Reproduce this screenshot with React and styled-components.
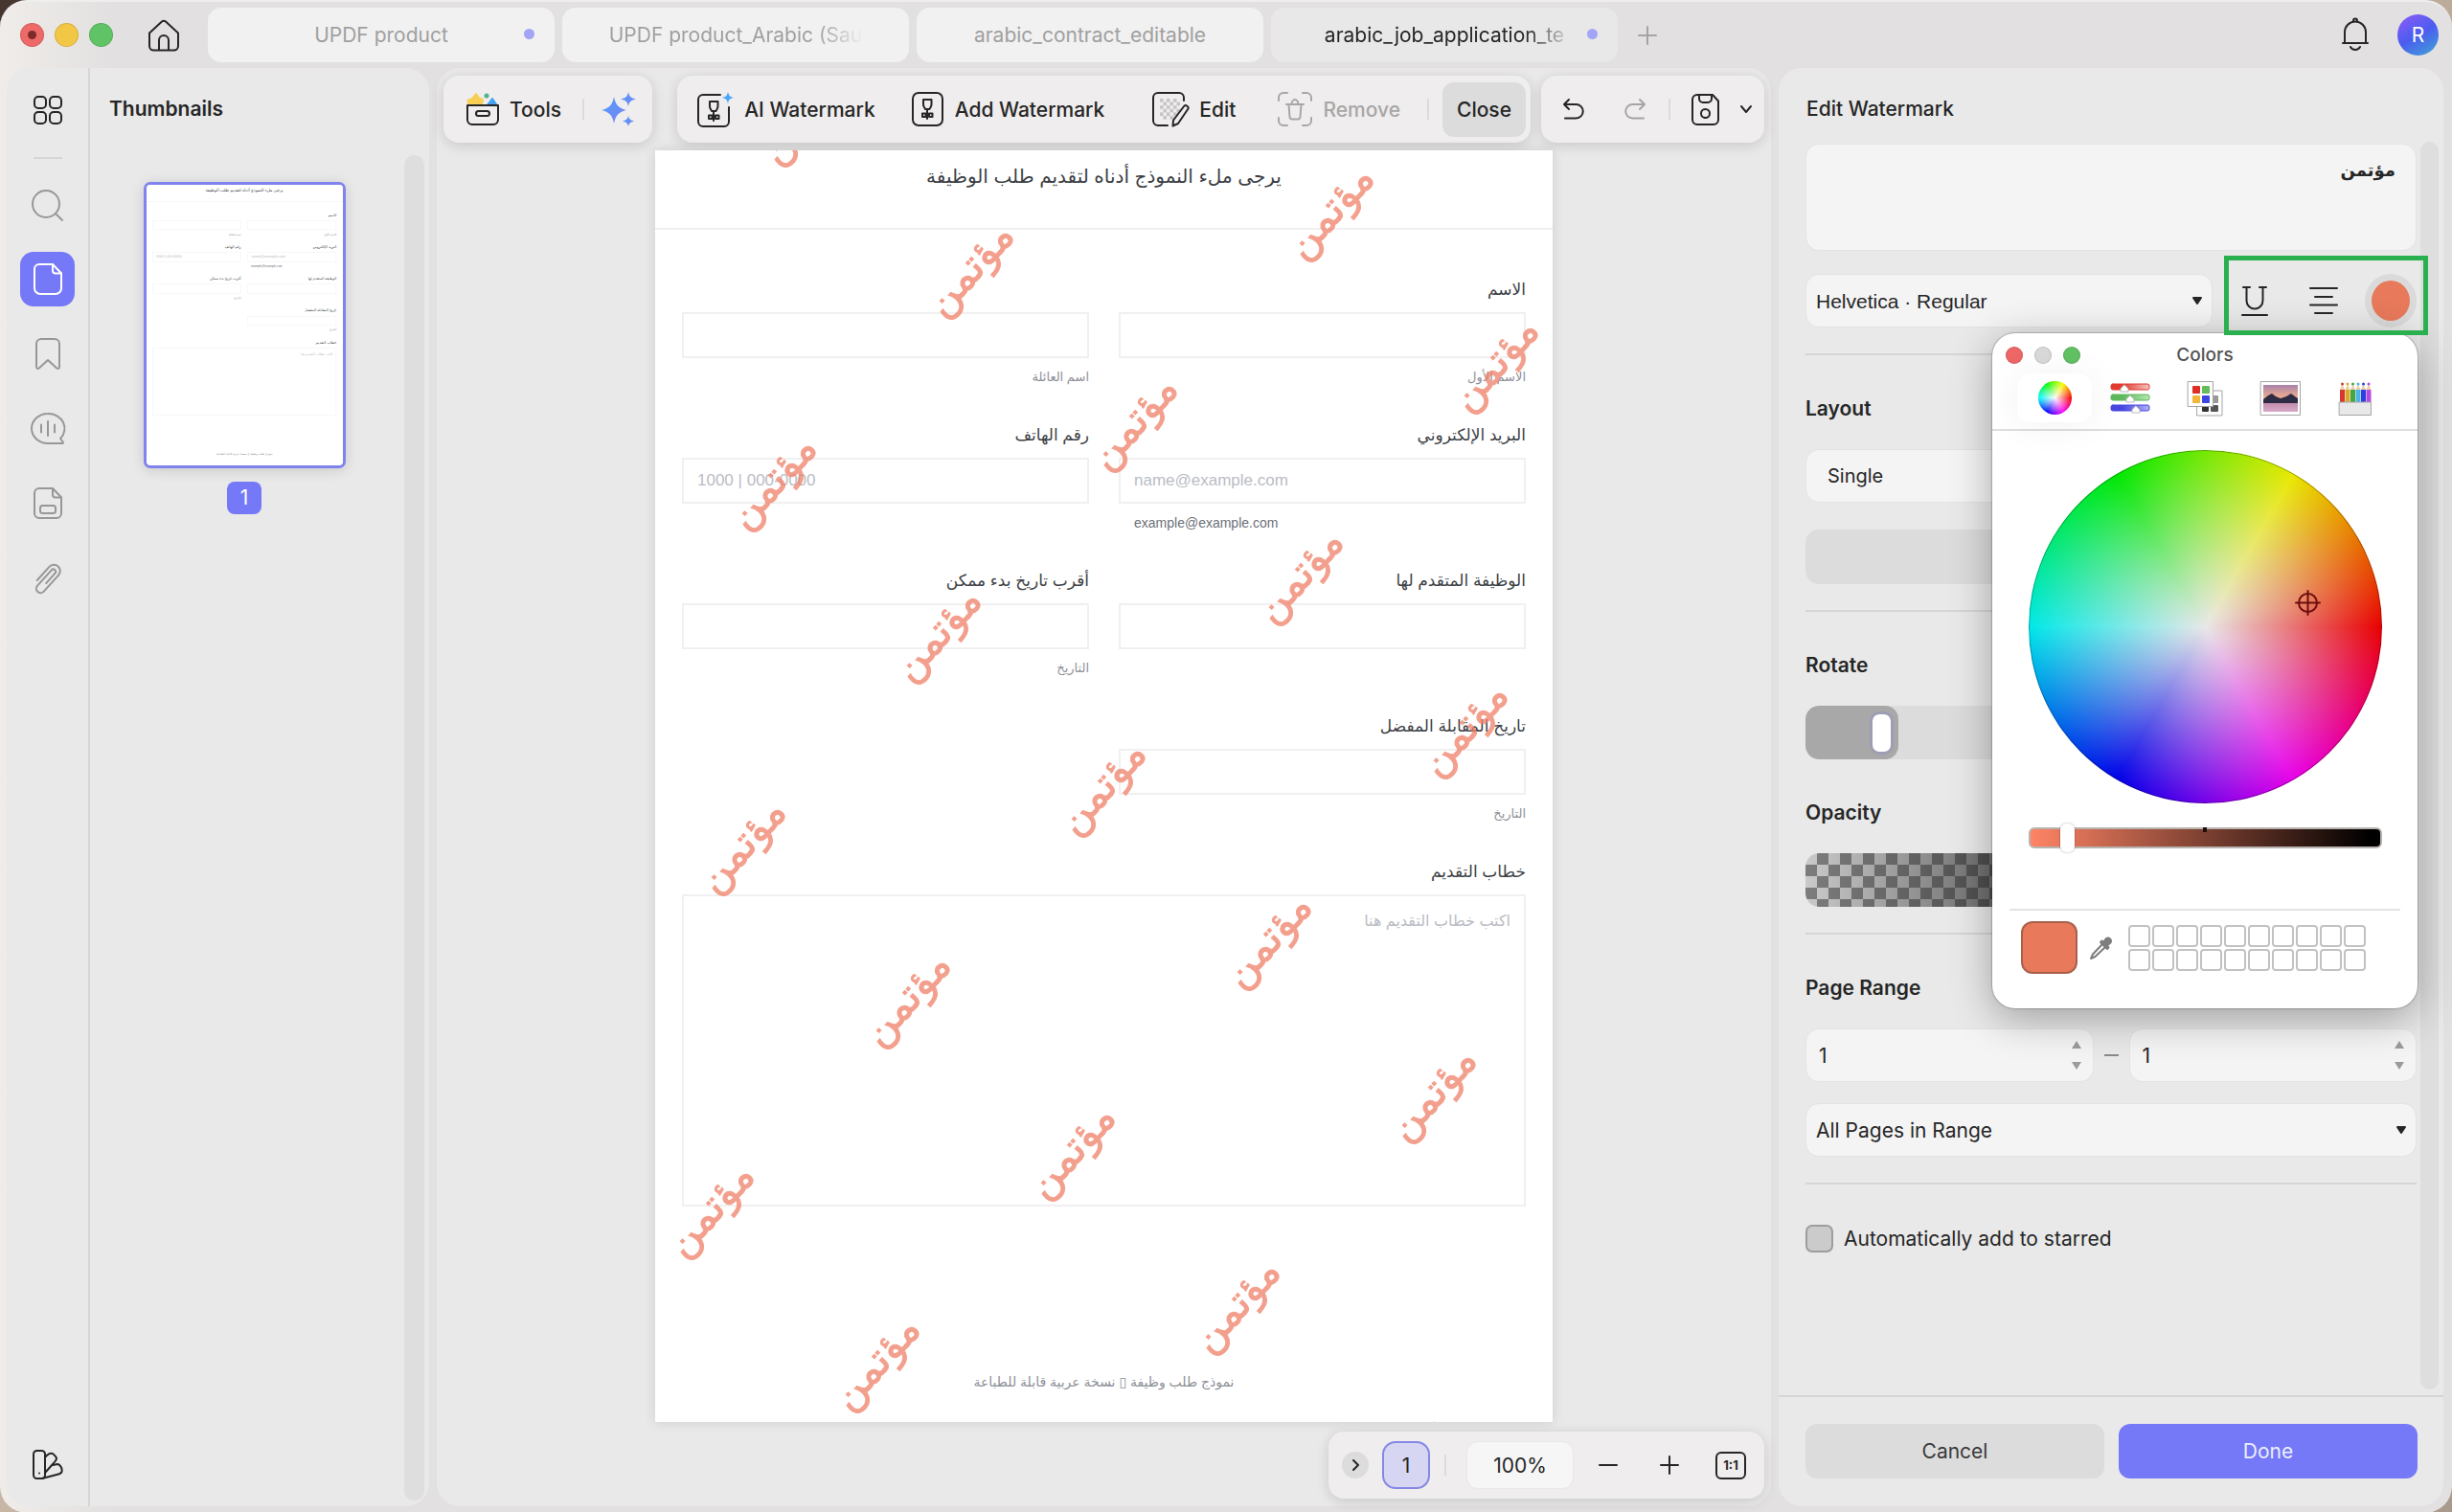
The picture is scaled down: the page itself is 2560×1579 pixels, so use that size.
import React, { useState } from 'react'
import styled, { createGlobalStyle, css } from 'styled-components'

const GlobalStyle = createGlobalStyle`
html {
  background: linear-gradient(135deg, #45362f 0, #45362f 30px, #d9c6b2 60px, #a89a8c 100%);
}
body {
  margin: 0;
  font-family: Inter, "DejaVu Sans", sans-serif;
  font-size: 21px;
  color: #262626;
}
*, *::before, *::after {
  box-sizing: border-box;
}
button, input, select, textarea {
  font: inherit;
  color: inherit;
  margin: 0;
}
button {
  border: none;
  background: none;
  padding: 0;
}
h2, h3, p {
  margin: 0;
}
`;

/* ---------- window ---------- */

const Window = styled.div`
display: flex;
flex-direction: column;
min-height: 100vh;
border-radius: 28px;
background: linear-gradient(90deg, #efece9 0, #e2e0e0 120px);
border-top: 2px solid #efeeee;
overflow: hidden;
`;
const TitleBar = styled.header`
display: flex;
align-items: center;
height: 69px;
padding: 0 14px 0 21px;
`;
const Lights = styled.div`
display: flex;
gap: ${(p) => (p.$small ? '12px' : '11px')};
`;
const Light = styled.button`
display: flex;
align-items: center;
justify-content: center;
width: ${(p) => (p.$small ? '18px' : '25px')};
height: ${(p) => (p.$small ? '18px' : '25px')};
border-radius: 50%;
background: ${(p) => p.$color};
box-shadow: inset 0 0 0 1px rgba(0, 0, 0, 0.12);
&[data-dirty]::after {
  content: '';
  width: 9px;
  height: 9px;
  border-radius: 50%;
  background: #7c2b29;
}
`;
const IconButton = styled.button`
display: flex;
align-items: center;
justify-content: center;
margin-right: ${(p) => p.$after || '0'};
color: ${(p) => (p.$muted ? '#a5a3a3' : '#262626')};
`;
const HomeButton = styled(IconButton)`
margin: 0 29px 0 36px;
`;
const Tabs = styled.nav`
display: flex;
gap: 8px;
`;
const Tab = styled.button`
position: relative;
width: 362px;
height: 57px;
padding: 0 47px;
border-radius: 14px;
background: ${(p) => (p.$active ? '#e8e8e8' : '#f1f1f1')};
color: ${(p) => (p.$active ? '#262626' : '#a0a0a0')};
`;
const TabLabel = styled.span`
display: block;
overflow: hidden;
white-space: nowrap;
mask-image: ${(p) => (p.$fade ? 'linear-gradient(90deg, #000 calc(100% - 50px), transparent)' : 'none')};
`;
const Dot = styled.i`
position: absolute;
right: 21px;
top: 22px;
width: 11px;
height: 11px;
border-radius: 50%;
background: #a3a4f5;
`;
const AddTab = styled(IconButton)`
margin-left: 22px;
`;
const Account = styled.div`
display: flex;
align-items: center;
gap: 30px;
margin-left: auto;
`;
const Avatar = styled.button`
width: 43px;
height: 43px;
border-radius: 50%;
background: linear-gradient(150deg, #7c5cf5 15%, #4b5cf0 50%, #3fa0d8 95%);
color: #fff;
`;
const Body = styled.div`
display: flex;
flex: 1;
gap: 8px;
padding: 0 9px 7px 7px;
`;
const panel = css`
background: #e9e9e9;
border-radius: 24px;
`;

/* ---------- left side ---------- */

const LeftPanel = styled.aside`
${panel}
display: flex;
width: 441px;
`;
const Rail = styled.nav`
display: flex;
flex-direction: column;
align-items: center;
gap: 21px;
width: 87px;
padding: 15px 0 15px;
border-right: 2px solid #d6d6d6;
hr {
  width: 30px;
  height: 2px;
  margin: 0 0 -2px;
  border: none;
  background: #d6d6d6;
}
`;
const RailButton = styled.button`
display: flex;
align-items: center;
justify-content: center;
width: 57px;
height: 57px;
border-radius: 14px;
background: ${(p) => (p.$active ? '#7579f7' : 'none')};
color: ${(p) => (p.$active ? '#fff' : p.$dark ? '#262626' : '#979797')};
&:last-child {
  margin-top: auto;
}
`;
const Thumbnails = styled.section`
display: flex;
flex-direction: column;
flex: 1;
padding: 29px 5px 6px 20px;
h2 {
  font-size: 21px;
  line-height: 28px;
  font-weight: 600;
}
`;
const ThumbScroll = styled.div`
display: flex;
flex: 1;
margin-top: 34px;
`;
const ThumbList = styled.div`
display: flex;
flex-direction: column;
align-items: center;
flex: 1;
padding: 28px 26px 0 0;
`;
const Thumb = styled.div`
width: 211px;
height: 299px;
border: 3px solid #8083ee;
border-radius: 7px;
background: #fff;
overflow: hidden;
box-shadow: 0 2px 14px rgba(0, 0, 0, 0.14);
`;
const ThumbPage = styled.div`
zoom: 0.219;
input, textarea, p {
  border-color: #f8f8f8;
}
`;
const ThumbNumber = styled.span`
width: 36px;
margin-top: 14px;
border-radius: 8px;
background: #7579f7;
color: #fff;
line-height: 34px;
text-align: center;
`;
const ScrollBar = styled.div`
width: ${(p) => p.$width || '21px'};
border-radius: 11px;
background: #dedede;
`;

/* ---------- toolbar ---------- */

const Center = styled.main`
${panel}
display: flex;
flex-direction: column;
flex: 1;
min-width: 0;
padding: 8px 7px;
`;
const Toolbars = styled.div`
display: flex;
gap: 11px;
> :first-child {
  margin-right: auto;
}
`;
const Bar = styled.div`
display: flex;
align-items: center;
height: 70px;
border-radius: 16px;
background: #efeded;
box-shadow: 0 3px 14px rgba(0, 0, 0, 0.14);
padding: ${(p) => p.$padding};
`;
const Tool = styled.button`
display: flex;
align-items: center;
gap: 11px;
margin-right: ${(p) => p.$after || '0'};
font-weight: 500;
white-space: nowrap;
color: ${(p) => (p.disabled ? '#a8a6a6' : '#262626')};
`;
const Divider = styled.span`
width: 2px;
height: 22px;
margin-right: ${(p) => p.$after};
background: #dcdada;
`;
const CloseButton = styled.button`
width: 87px;
height: 57px;
border-radius: 12px;
background: #dcdcdc;
font-weight: 500;
`;

/* ---------- document ---------- */

const Sheet = styled.article`
position: relative;
width: 937px;
max-width: 100%;
margin: 8px auto 10px;
background: #fff;
box-shadow: 0 0 12px rgba(0, 0, 0, 0.12);
overflow: hidden;
direction: rtl;
font-family: "Liberation Sans", "DejaVu Sans", sans-serif;
color: #3c3f45;
`;
const ThumbSheet = styled(Sheet)`
margin: 0;
box-shadow: none;
`;
const Intro = styled.p`
height: 83px;
padding-top: 12px;
border-bottom: 2px solid #f0f0f2;
text-align: center;
font-size: 20px;
line-height: 30px;
`;
const FormGrid = styled.div`
display: grid;
grid-template-columns: 1fr 1fr;
column-gap: 31px;
row-gap: 36px;
padding: 48px 28px 0;
`;
const Field = styled.div`
display: flex;
flex-direction: column;
grid-column: ${(p) => (p.$wide ? '1 / -1' : p.$first ? '1' : 'auto')};
label {
  height: 30px;
  margin-bottom: 8px;
  font-size: 17px;
  line-height: 30px;
}
small {
  height: 20px;
  margin-top: 10px;
  font-size: 13px;
  line-height: 20px;
  color: #8d9098;
}
small[dir='ltr'] {
  padding-left: 16px;
  font-size: 14px;
  color: #6c7078;
}
`;
const fieldBox = css`
width: 100%;
border: 2px solid #f0f0f2;
border-radius: 0;
background: transparent;
outline: none;
padding: 0 14px;
&::placeholder {
  color: #babcc4;
  opacity: 1;
}
`;
const FieldInput = styled.input`
${fieldBox}
height: 48px;
font-size: 17px;
`;
const FieldArea = styled.textarea`
${fieldBox}
height: 326px;
padding-top: 12px;
font-size: 16px;
line-height: 28px;
resize: none;
`;
const SheetFooter = styled.p`
padding: 171px 0 30px;
text-align: center;
font-size: 14px;
line-height: 24px;
color: #8d9098;
`;
const Mark = styled.span`
position: absolute;
left: ${(p) => p.$x}px;
top: ${(p) => p.$y}px;
padding-bottom: 20px;
transform: translate(-50%, -50%) rotate(-48deg);
font-family: "DejaVu Sans", sans-serif;
font-size: 43px;
line-height: 48px;
color: #f08068;
-webkit-text-stroke: 1px #f08068;
opacity: 0.75;
pointer-events: none;
`;
const PageBar = styled(Bar)`
align-self: flex-end;
`;
const RoundButton = styled.button`
display: flex;
align-items: center;
justify-content: center;
width: 28px;
height: 28px;
border-radius: 50%;
background: #dddcdc;
`;
const PageNumber = styled.input`
width: 50px;
height: 50px;
margin: 0 15px 0 14px;
padding: 0;
border: 2px solid #8587e6;
border-radius: 14px;
background: #d6d6f3;
text-align: center;
`;
const ZoomLevel = styled.button`
width: 112px;
height: 50px;
margin-right: 27px;
border: 1px solid #e8e8e8;
border-radius: 12px;
background: #f6f6f6;
`;

/* ---------- edit watermark ---------- */

const RightPanel = styled.aside`
${panel}
position: relative;
display: flex;
flex-direction: column;
width: 694px;
`;
const PanelTitle = styled.h2`
padding: 29px 0 0 29px;
font-size: 21px;
line-height: 28px;
font-weight: 500;
`;
const PanelScroll = styled.div`
display: flex;
flex: 1;
gap: 4px;
padding: 20px 5px 6px 28px;
`;
const Options = styled.form`
display: flex;
flex-direction: column;
flex: 1;
min-width: 0;
padding-top: 2px;
h3 {
  font-size: 21px;
  line-height: 28px;
  font-weight: 600;
}
> hr {
  width: 100%;
  height: 2px;
  margin: 27px 0 42px;
  border: none;
  background: #d5d5d5;
}
`;
const softBox = css`
width: 100%;
height: 56px;
border: 1px solid #e3e3e3;
border-radius: 14px;
background: #f4f4f4;
outline: none;
`;
const WatermarkText = styled.textarea`
${softBox}
height: 112px;
padding: 12px 21px;
direction: rtl;
resize: none;
font-family: "DejaVu Sans", sans-serif;
font-size: 18px;
font-weight: 700;
line-height: 30px;
`;
const FontRow = styled.div`
display: flex;
gap: 12px;
height: 56px;
margin-top: 24px;
> :first-child {
  flex: 1;
}
`;
const SelectBox = styled.div`
display: grid;
align-items: center;
select, svg {
  grid-area: 1 / 1;
}
select {
  ${softBox}
  appearance: none;
  padding: 0 10px;
  font-family: ${(p) => p.$font || 'inherit'};
}
svg {
  justify-self: end;
  margin-right: 11px;
  pointer-events: none;
}
`;
const StyleTools = styled.div`
position: relative;
display: flex;
align-items: center;
gap: 43px;
width: 201px;
padding-left: 18px;
&::after {
  content: '';
  position: absolute;
  inset: -19px -12px -8px 0;
  z-index: 3;
  border: 5px solid #2bb04f;
  pointer-events: none;
}
`;
const ColorButton = styled.button`
width: 56px;
height: 56px;
margin-left: -15px;
border: 7px solid #dadada;
border-radius: 50%;
background: #e8795b;
`;
const LayoutInput = styled.select`
${softBox}
appearance: none;
margin-top: 28px;
padding: 0 22px;
font-size: 20px;
`;
const DisabledBox = styled.button`
height: 57px;
margin-top: 28px;
border-radius: 14px;
background: #dcdcdc;
`;
const Slider = styled.div`
display: grid;
height: 56px;
margin: 28px 0 ${(p) => (p.$last ? '0' : '42px')};
border-radius: 14px;
background: #dcdcdc;
overflow: hidden;
&::before {
  content: '';
  grid-area: 1 / 1;
  width: ${(p) => (p.$checker ? '100%' : '97px')};
  border-radius: 14px;
  background: ${(p) =>
    p.$checker
      ? 'linear-gradient(90deg, transparent, rgba(40, 40, 40, 0.95) 50%), repeating-conic-gradient(#7d7d7d 0 25%, #cacaca 0 50%) 0 0 / 24px 24px'
      : '#a8a8a8'};
}
input {
  grid-area: 1 / 1;
  appearance: none;
  width: 100%;
  height: 56px;
  padding: 0 8px;
  background: none;
}
input::-webkit-slider-thumb {
  appearance: none;
  width: 19px;
  height: 39px;
  border-radius: 7px;
  background: #fff;
  box-shadow: 0 0 0 3px #9d9db4;
}
`;
const RangeRow = styled.div`
display: flex;
align-items: center;
gap: 11px;
margin: 28px 0 22px;
> i {
  width: 15px;
  height: 2px;
  background: #8a8a8a;
}
`;
const Stepper = styled.div`
${softBox}
display: flex;
align-items: center;
flex: 1;
min-width: 0;
padding: 0 11px 0 13px;
input {
  flex: 1;
  min-width: 0;
  border: none;
  background: none;
  outline: none;
  padding: 0;
  appearance: textfield;
}
input::-webkit-inner-spin-button {
  display: none;
}
svg {
  color: #9b9b9b;
}
`;
const CheckRow = styled.label`
display: flex;
align-items: center;
gap: 11px;
input {
  appearance: none;
  width: 29px;
  height: 29px;
  border: 2px solid #9d9d9d;
  border-radius: 7px;
  background: #cbcbcb;
}
`;
const Actions = styled.footer`
display: flex;
gap: 15px;
padding: 28px 27px 29px 28px;
border-top: 2px solid #d5d5d5;
`;
const ActionButton = styled.button`
flex: 1;
height: 57px;
border-radius: 12px;
background: ${(p) => (p.$primary ? '#7579f7' : '#dcdcdc')};
color: ${(p) => (p.$primary ? '#eceffe' : '#3a3a3a')};
`;

/* ---------- colour picker window ---------- */

const Picker = styled.section`
position: absolute;
top: 277px;
right: 27px;
z-index: 2;
width: 444px;
border-radius: 24px;
background: #fff;
padding-bottom: 36px;
box-shadow: 0 0 1px 1px rgba(0, 0, 0, 0.2), 0 10px 44px rgba(0, 0, 0, 0.32);
`;
const PickerTitle = styled.div`
display: grid;
grid-template-columns: 1fr auto 1fr;
align-items: center;
height: 42px;
padding: 3px 14px 0;
h2 {
  font-size: 19px;
  font-weight: 500;
  color: #555;
}
`;
const PickerTabs = styled.div`
display: flex;
justify-content: space-between;
padding: 0 26px 7px;
border-bottom: 2px solid #dedede;
`;
const PickerTab = styled.button`
display: flex;
align-items: center;
justify-content: center;
width: 78px;
height: 51px;
border-radius: 14px;
box-shadow: ${(p) => (p.$active ? '0 2px 40px rgba(0, 0, 0, 0.06)' : 'none')};
`;
const wheel = css`
border-radius: 50%;
background:
  radial-gradient(circle closest-side, #e8e8e8, rgba(232, 232, 232, 0)),
  conic-gradient(from 90deg, #e80000, #e800e8, #0000e8, #00e8e8, #00e800, #e8e800, #e80000);
`;
const SmallWheel = styled.span`
${wheel}
width: 35px;
height: 35px;
filter: brightness(1.08);
`;
const Wheel = styled.div`
${wheel}
position: relative;
width: 369px;
height: 369px;
margin: 20px auto 21px;
box-shadow: inset 0 0 0 1px rgba(0, 0, 0, 0.3);
svg {
  position: absolute;
  left: 278px;
  top: 146px;
}
`;
const BrightnessBox = styled.div`
position: relative;
display: flex;
width: 369px;
margin: 0 auto 59px;
&::after {
  content: '';
  position: absolute;
  left: 182px;
  top: 4px;
  width: 4px;
  height: 5px;
  background: #1a1010;
}
`;
const Brightness = styled.input`
appearance: none;
width: 100%;
height: 30px;
background: none;
&::-webkit-slider-runnable-track {
  height: 22px;
  border: 2px solid #b9b3b0;
  border-radius: 6px;
  background: linear-gradient(90deg, #ff8465, #000 97%);
}
&::-webkit-slider-thumb {
  appearance: none;
  width: 15px;
  height: 30px;
  margin-top: -6px;
  border-radius: 6px;
  background: #fff;
  box-shadow: 0 0 2px rgba(0, 0, 0, 0.4);
}
`;
const SwatchRow = styled.div`
display: flex;
align-items: center;
margin: 0 18px;
padding: 11px 12px 0;
border-top: 2px solid #e3e3e3;
`;
const CurrentColor = styled.button`
width: 59px;
height: 55px;
border: 2px solid #a9604b;
border-radius: 12px;
background: #e8795b;
`;
const Dropper = styled(IconButton)`
margin: 0 16px 0 13px;
color: #7e7e7e;
`;
const Swatches = styled.div`
display: grid;
grid-template-columns: repeat(10, 23px);
gap: 2px;
button {
  height: 23px;
  border: 2px solid #c2c2c2;
  border-radius: 4px;
}
`;

/* ---------- icons ---------- */

const Svg = styled.svg`
display: block;
flex: none;
fill: none;
stroke: ${(p) => (p.$plain ? 'none' : 'currentColor')};
stroke-width: ${(p) => (p.$plain ? 1 : 2)};
stroke-linecap: round;
stroke-linejoin: round;
overflow: visible;
`;

const Icon = ({ w, h = w, plain, color, children }) => (
  <Svg width={w} height={h} viewBox={`0 0 ${w} ${h}`} $plain={plain} color={color} aria-hidden='true'>{children}</Svg>
)

const HomeIcon = () => (
  <Icon w={34}>
    <path d='M2 14.5 15 2.6a3 3 0 0 1 4 0L32 14.5V28a4.5 4.5 0 0 1-4.5 4.5h-21A4.5 4.5 0 0 1 2 28z' />
    <path d='M12 32V22a5 5 0 0 1 10 0v10' />
  </Icon>
)
const GridIcon = () => (
  <Icon w={30}>
    <rect x='1' y='1' width='12' height='12' rx='4' />
    <rect x='17' y='1' width='12' height='12' rx='4' />
    <rect x='1' y='17' width='12' height='12' rx='4' />
    <rect x='17' y='17' width='12' height='12' rx='4' />
  </Icon>
)
const SearchIcon = () => (
  <Icon w={34}>
    <circle cx='15' cy='16' r='14' />
    <path d='m25 26 7 7' />
  </Icon>
)
const FileIcon = () => (
  <Icon w={30} h={33}>
    <path d='M6 1h14l9 9.5V26a6 6 0 0 1-6 6H7a6 6 0 0 1-6-6V6a5 5 0 0 1 5-5z' />
    <path d='M20 1v6.5a3 3 0 0 0 3 3h6' />
  </Icon>
)
const BookmarkIcon = () => (
  <Icon w={26} h={33}>
    <path d='M6 1h14a5 5 0 0 1 5 5v24c0 2-1.5 2.500-3 1.200L13 23l-9 8.200C2.500 32.500 1 32 1 30V6a5 5 0 0 1 5-5z' />
  </Icon>
)
const CommentIcon = () => (
  <Icon w={36} h={33}>
    <path d='M18 1a17 15.5 0 1 0 0 31h15c1 0 1.300-.8.6-1.500L31 27A17 15.500 0 0 0 18 1z' />
    <path d='M11 12.500v8M18 9v15M25 12.500v8' />
  </Icon>
)
const FormIcon = () => (
  <Icon w={30} h={33}>
    <path d='M6 1h14l9 9.5V27a5 5 0 0 1-5 5H6a5 5 0 0 1-5-5V6a5 5 0 0 1 5-5z' />
    <path d='M20 1v6.5a3 3 0 0 0 3 3h6' />
    <rect x='7' y='19' width='16' height='8' rx='2.5' />
  </Icon>
)
const ClipIcon = () => (
  <Icon w={34}>
    <g transform='translate(17 17) rotate(-48)'>
      <path d='M-9 -7H10a6.5 6.5 0 0 1 0 13H-13a4.5 4.5 0 0 1 0 -9H9a2.5 2.5 0 0 1 0 5H-5' />
    </g>
  </Icon>
)
const PaletteIcon = () => (
  <Icon w={32} h={31}>
    <rect x='1' y='1' width='12' height='29' rx='3.5' />
    <path d='M13 8c2-2.500 5-4.500 7-4.200 2 .2 5 4.200 5 5.200 0 2-2 4-3.500 5.500L13 24' />
    <path d='m21 16 5-1c2 0 4.500 3 4.700 6.500.1 2.500-1.700 3.500-3.700 4L10 30' />
    <path d='M7 24.500v.1' />
  </Icon>
)
const BellIcon = () => (
  <Icon w={28} h={35}>
    <path d='M3 26V14.500a11 11 0 0 1 22 0V26M1 26h26M12 3.500v-1a2 2 0 0 1 4 0v1M9 30a5.500 5 0 0 0 10 0' />
  </Icon>
)
const PlusIcon = ({ size = 18 }) => (
  <Icon w={size}><path d={`M${size / 2} 0V${size}M0 ${size / 2}H${size}`} /></Icon>
)
const ToolsIcon = () => (
  <Icon w={34}>
    <path d='m10 1 3 4.500 4 1.500-1.500 7H3L1.500 8 6 6z' fill='#f7cf55' stroke='#f7cf55' />
    <circle cx='21' cy='3' r='2.5' fill='#4bb58b' stroke='none' />
    <path d='m27 6 5.500 8H21z' fill='#45a3f3' stroke='#45a3f3' />
    <path d='M1 13h32v15a5 5 0 0 1-5 5H6a5 5 0 0 1-5-5z' fill='#efeded' />
    <rect x='10' y='19' width='14' height='5' rx='2.5' />
  </Icon>
)
const SparkIcon = () => (
  <Icon w={36} plain>
    <defs>
      <linearGradient id='spark' x1='0' y1='0' x2='1' y2='1'>
        <stop offset='0' stopColor='#4fa0f5' />
        <stop offset='1' stopColor='#7c80f6' />
      </linearGradient>
    </defs>
    <g fill='url(#spark)'>
      <path d='M13 5c1.500 8 4.500 12 13 14-8.500 2-11.500 6-13 14C11.500 25 8.500 21 0 19 8.500 17 11.500 13 13 5z' />
      <path d='M28 0c.9 4.600 2.800 6.500 8 7.500-5.200 1-7.100 2.900-8 7.500-.9-4.600-2.800-6.500-8-7.500 5.200-1 7.100-2.900 8-7.500z' />
      <path d='M28 25c.7 3 2 4.500 6 5.500-4 1-5.300 2.500-6 5.500-.7-3-2-4.500-6-5.500 4-1 5.300-2.500 6-5.500z' />
    </g>
  </Icon>
)
const stamp = (
  <>
    <path d='M12 8h8.500v5c0 2.500-1.500 3.500-2 5h-4.500c-.5-1.500-2-2.500-2-5z' />
    <path d='M16 18v10M11 22.500h3.500v2H18v-2h3.500V26H18M11 22.500V26h5' />
  </>
)
const AiStampIcon = () => (
  <Icon w={38} h={37}>
    <path d='M24 3H6a5 5 0 0 0-5 5v23a5 5 0 0 0 5 5h22a5 5 0 0 0 5-5V16' />
    <g transform='translate(1 2)'>{stamp}</g>
    <path d='M32 0c1 4 2 5 6 6-4 1-5 2-6 6-1-4-2-5-6-6 4-1 5-2 6-6z' fill='#4aa7f8' stroke='none' />
  </Icon>
)
const StampIcon = () => (
  <Icon w={34} h={36}>
    <rect x='1' y='1' width='31' height='34' rx='6' />
    {stamp}
  </Icon>
)
const EditIcon = () => (
  <Icon w={38} h={36}>
    <g fill='#c6c4c4' stroke='none'>
      {[0, 1, 2, 3, 4, 5].map((r) =>
        [0, 1, 2].map((c) => <rect key={`${r}${c}`} x={8 + c * 7 + (r % 2) * 3.5} y={7 + r * 3.6} width='3.5' height='3.6' />)
      )}
    </g>
    <path d='M33 9V6a5 5 0 0 0-5-5H6a5 5 0 0 0-5 5v24a5 5 0 0 0 5 5h10' />
    <path d='M33.500 14.500c1.500-1.500 5 1 4 3L27 33l-5.500 2.500.5-6z' fill='#efeded' />
  </Icon>
)
const RemoveIcon = () => (
  <Icon w={36}>
    <path d='M1 9V6a5 5 0 0 1 5-5h4M26 1h4a5 5 0 0 1 5 5v3M35 27v3a5 5 0 0 1-5 5h-4M10 35H6a5 5 0 0 1-5-5v-3' />
    <path d='M9 13h18M11.500 13l1 13a2.500 2.500 0 0 0 2.500 2.500h6a2.500 2.500 0 0 0 2.500-2.500l1-13M14.500 13a3.500 5 0 0 1 7 0' />
  </Icon>
)
const UndoIcon = ({ flip }) => (
  <Icon w={22}>
    <g transform={flip ? 'translate(22 0) scale(-1 1)' : undefined}>
      <path d='M6 1 1 6l5 5M1 6h12.500a7 7 0 0 1 0 14.500H2' />
    </g>
  </Icon>
)
const SaveIcon = () => (
  <Icon w={29} h={33}>
    <path d='M6 1h16l6 6.500V27a5 5 0 0 1-5 5H6a5 5 0 0 1-5-5V6a5 5 0 0 1 5-5z' />
    <path d='M8 1v4a4 4 0 0 0 4 4h5a4 4 0 0 0 4-4V1' />
    <circle cx='14.5' cy='20.5' r='4.5' />
  </Icon>
)
const Triangle = () => (
  <Icon w={10} h={8}><path d='M1 1h8L5 7z' fill='currentColor' /></Icon>
)
const UnderlineIcon = () => (
  <Icon w={28} h={31}>
    <path d='M2 1h7M19 1h7M5.500 1v14a8.500 8.500 0 0 0 17 0V1M1 30h26' />
  </Icon>
)
const AlignIcon = () => (
  <Icon w={30} h={28}><path d='M1 1h28M6 10h18M1 18.500h28M6 27h18' /></Icon>
)
const OneToOneIcon = () => (
  <Icon w={32} h={29}>
    <rect x='1' y='1' width='30' height='27' rx='5' />
    <text x='16' y='19' textAnchor='middle' fontSize='13' fontWeight='700' fill='currentColor' stroke='none'>1:1</text>
  </Icon>
)
const SlidersIcon = () => (
  <Icon w={40} h={32} plain>
    {[['#e23a30', '#f5c4c0', 14], ['#5cb85a', '#b5e6b0', 20], ['#4747e0', '#b0b0f5', 26]].map(([a, b, x], i) => (
      <g key={a}>
        <linearGradient id={`bar${i}`}><stop offset='.3' stopColor={a} /><stop offset='1' stopColor={b} /></linearGradient>
        <rect x='0' y={1 + i * 11} width='40' height='6' rx='2' fill={`url(#bar${i})`} stroke={a} />
        <path d={`M${x} ${2 + i * 11}l4 4v3h-8v-3z`} fill='#fff' stroke='#bbb' />
      </g>
    ))}
  </Icon>
)
const PalettesIcon = () => (
  <Icon w={37} h={36} plain>
    <rect x='10' y='10' width='26' height='26' fill='#fff' stroke='#a5a5a5' />
    <rect x='15' y='25' width='7' height='7' rx='1' fill='#333' />
    <rect x='24' y='25' width='8' height='7' rx='1' fill='#555' />
    <rect x='24' y='15' width='8' height='8' rx='1' fill='#999' />
    <rect x='.5' y='.5' width='26' height='26' fill='#fff' stroke='#a5a5a5' />
    <rect x='5' y='5' width='8' height='8' rx='1' fill='#dd2f28' />
    <rect x='15' y='5' width='8' height='8' rx='1' fill='#62bd5a' />
    <rect x='5' y='15' width='8' height='8' rx='1' fill='#f3b53a' />
    <rect x='15' y='15' width='8' height='8' rx='1' fill='#3e48e0' />
  </Icon>
)
const PhotoIcon = () => (
  <Icon w={42} h={36} plain>
    <linearGradient id='sky' x1='0' y1='0' x2='0' y2='1'>
      <stop offset='0' stopColor='#a883ab' /><stop offset='.5' stopColor='#f5b08c' />
      <stop offset='.7' stopColor='#c48fae' /><stop offset='1' stopColor='#d8a8c8' />
    </linearGradient>
    <rect x='.5' y='.5' width='41' height='35' fill='#fff' stroke='#a5a5a5' />
    <rect x='3' y='4' width='36' height='28' fill='url(#sky)' />
    <path d='M3 19l5-4 4-2 4 3 5 2 6-2 5-3 4 3 3 2v5H3z' fill='#2e2b45' />
  </Icon>
)
const PencilsIcon = () => (
  <Icon w={34} h={36} plain>
    {['#d6372f', '#d9a92e', '#46a544', '#4fb3e0', '#2c3fe0', '#b54be0'].map((c, i) => (
      <g key={c} fill={c}>
        <path d={`M${i * 5.5 + 1} 9l2.500-6 2.500 6z`} fill='#eccfa8' />
        <circle cx={i * 5.5 + 3.5} cy='3' r='1.5' />
        <rect x={i * 5.5 + 1} y='9' width='5' height='14' />
      </g>
    ))}
    <rect x='.5' y='22' width='33' height='13.5' fill='#e8e8e8' stroke='#a5a5a5' />
  </Icon>
)
const DropperIcon = () => (
  <Icon w={24}>
    <path d='M13 8 3 18.500 1 23l4.500-2L16 11' />
    <path d='m11 6 7 7 1.500-1.500-1.500-2 3.500-3A3.300 3.300 0 0 0 17 2l-3 4-1.500-1.500z' fill='currentColor' />
  </Icon>
)

/* ---------- data ---------- */

const WORD = 'مؤتمن'

const TABS = [
  { name: 'UPDF product', dirty: true },
  { name: 'UPDF product_Arabic (Sau', fade: true },
  { name: 'arabic_contract_editable' },
  { name: 'arabic_job_application_te', fade: true, dirty: true, active: true },
]

const FIELDS = [
  { label: 'الاسم', note: 'الاسم الأول' },
  { label: '', note: 'اسم العائلة' },
  { label: 'البريد الإلكتروني', hint: 'name@example.com', note: 'example@example.com', ltr: true },
  { label: 'رقم الهاتف', hint: '1000 | 000-0000', ltr: true },
  { label: 'الوظيفة المتقدم لها' },
  { label: 'أقرب تاريخ بدء ممكن', note: 'التاريخ' },
  { label: 'تاريخ المقابلة المفضل', note: 'التاريخ', first: true },
]

// centres of the repeated watermark, in sheet pixels
const MARKS = [
  [162, -29], [335, 130], [711, 70], [883, 229], [506, 290], [129, 352],
  [679, 450], [301, 511], [851, 610], [473, 671], [97, 732], [646, 831],
  [269, 892], [818, 991], [441, 1051], [64, 1112], [613, 1212], [237, 1272], [783, 1371],
]

const FormContent = ({ prefix }) => (
  <>
    <Intro>يرجى ملء النموذج أدناه لتقديم طلب الوظيفة</Intro>
    <FormGrid>
      {FIELDS.map((f, i) => (
        <Field key={i} $first={f.first}>
          <label htmlFor={`${prefix}${i}`}>{f.label}</label>
          <FieldInput id={`${prefix}${i}`} aria-label={f.label || f.note} dir={f.ltr ? 'ltr' : 'rtl'} placeholder={f.hint} />
          <small dir={f.ltr ? 'ltr' : 'rtl'}>{f.note}</small>
        </Field>
      ))}
      <Field $wide>
        <label htmlFor={`${prefix}letter`}>خطاب التقديم</label>
        <FieldArea id={`${prefix}letter`} placeholder='اكتب خطاب التقديم هنا' />
      </Field>
    </FormGrid>
    <SheetFooter>نموذج طلب وظيفة ▯ نسخة عربية قابلة للطباعة</SheetFooter>
  </>
)

const ColorPicker = () => (
  <Picker>
    <PickerTitle>
      <Lights $small>
        <Light $small $color='#ec6765' aria-label='Close colors' />
        <Light $small $color='#d9d9d9' aria-label='Minimize colors' />
        <Light $small $color='#61c163' aria-label='Zoom colors' />
      </Lights>
      <h2>Colors</h2>
    </PickerTitle>
    <PickerTabs>
      <PickerTab $active aria-label='Color wheel'><SmallWheel /></PickerTab>
      <PickerTab aria-label='Color sliders'><SlidersIcon /></PickerTab>
      <PickerTab aria-label='Color palettes'><PalettesIcon /></PickerTab>
      <PickerTab aria-label='Image palettes'><PhotoIcon /></PickerTab>
      <PickerTab aria-label='Pencils'><PencilsIcon /></PickerTab>
    </PickerTabs>
    <Wheel>
      <Icon w={27} color='#6e0d0d'>
        <circle cx='13.5' cy='13.5' r='9.5' />
        <path d='M13.500 1v25M1 13.500h25' />
      </Icon>
    </Wheel>
    <BrightnessBox>
      <Brightness type='range' defaultValue='9' aria-label='Brightness' />
    </BrightnessBox>
    <SwatchRow>
      <CurrentColor aria-label='Current color' />
      <Dropper aria-label='Pick color'><DropperIcon /></Dropper>
      <Swatches>
        {Array.from({ length: 20 }, (_, i) => <button key={i} aria-label={`Saved color ${i + 1}`} />)}
      </Swatches>
    </SwatchRow>
  </Picker>
)

const PageStepper = ({ label }) => (
  <Stepper>
    <input type='number' min='1' defaultValue='1' aria-label={label} />
    <Icon w={12} h={30} plain>
      <path d='M1 8h10L6 0zM1 22h10l-5 8z' fill='currentColor' />
    </Icon>
  </Stepper>
)

function App() {
  const [text, setText] = useState(WORD)

  return (
    <>
      <GlobalStyle />
      <Window>
        <TitleBar>
          <Lights>
            <Light $color='#ed6a68' data-dirty aria-label='Close window' />
            <Light $color='#f2c745' aria-label='Minimize window' />
            <Light $color='#60c466' aria-label='Zoom window' />
          </Lights>
          <HomeButton aria-label='Home'><HomeIcon /></HomeButton>
          <Tabs>
            {TABS.map((t) => (
              <Tab key={t.name} $active={t.active}>
                <TabLabel $fade={t.fade}>{t.name}</TabLabel>
                {t.dirty && <Dot />}
              </Tab>
            ))}
          </Tabs>
          <AddTab $muted aria-label='New tab'><PlusIcon /></AddTab>
          <Account>
            <IconButton aria-label='Notifications'><BellIcon /></IconButton>
            <Avatar>R</Avatar>
          </Account>
        </TitleBar>

        <Body>
          <LeftPanel>
            <Rail>
              <RailButton $dark aria-label='All panels'><GridIcon /></RailButton>
              <hr />
              <RailButton aria-label='Search'><SearchIcon /></RailButton>
              <RailButton $active aria-label='Thumbnails'><FileIcon /></RailButton>
              <RailButton aria-label='Bookmarks'><BookmarkIcon /></RailButton>
              <RailButton aria-label='Comments'><CommentIcon /></RailButton>
              <RailButton aria-label='Form fields'><FormIcon /></RailButton>
              <RailButton aria-label='Attachments'><ClipIcon /></RailButton>
              <RailButton $dark aria-label='Theme'><PaletteIcon /></RailButton>
            </Rail>
            <Thumbnails>
              <h2>Thumbnails</h2>
              <ThumbScroll>
                <ThumbList>
                  <Thumb>
                    <ThumbPage inert aria-hidden='true'>
                      <ThumbSheet><FormContent prefix='thumb' /></ThumbSheet>
                    </ThumbPage>
                  </Thumb>
                  <ThumbNumber>1</ThumbNumber>
                </ThumbList>
                <ScrollBar />
              </ThumbScroll>
            </Thumbnails>
          </LeftPanel>

          <Center>
            <Toolbars>
              <Bar $padding='0 17px 0 24px'>
                <Tool $after='22px'><ToolsIcon />Tools</Tool>
                <Divider $after='18px' />
                <IconButton aria-label='AI assistant'><SparkIcon /></IconButton>
              </Bar>
              <Bar $padding='0 5px 0 21px'>
                <Tool $after='38px'><AiStampIcon />AI Watermark</Tool>
                <Tool $after='50px'><StampIcon />Add Watermark</Tool>
                <Tool $after='44px'><EditIcon />Edit</Tool>
                <Tool $after='28px' disabled><RemoveIcon />Remove</Tool>
                <Divider $after='14px' />
                <CloseButton>Close</CloseButton>
              </Bar>
              <Bar $padding='0 13px 0 23px'>
                <IconButton $after='42px' aria-label='Undo'><UndoIcon /></IconButton>
                <IconButton $after='24px' $muted aria-label='Redo'><UndoIcon flip /></IconButton>
                <Divider $after='22px' />
                <IconButton $after='22px' aria-label='Save'><SaveIcon /></IconButton>
                <IconButton aria-label='Save options'>
                  <Icon w={12} h={8}><path d='m1 1 5 6 5-6' /></Icon>
                </IconButton>
              </Bar>
            </Toolbars>
            <Sheet>
              <FormContent prefix='field' />
              {MARKS.map(([x, y]) => <Mark key={`${x}${y}`} $x={x} $y={y} aria-hidden='true'>{WORD}</Mark>)}
            </Sheet>
            <PageBar $padding='0 19px 0 14px'>
              <RoundButton aria-label='Next page'>
                <Icon w={7} h={12}><path d='m1 1 5 5-5 5' /></Icon>
              </RoundButton>
              <PageNumber aria-label='Page' defaultValue='1' />
              <Divider $after='21px' />
              <ZoomLevel>100%</ZoomLevel>
              <IconButton $after='46px' aria-label='Zoom out'><Icon w={18}><path d='M0 9h18' /></Icon></IconButton>
              <IconButton $after='39px' aria-label='Zoom in'><PlusIcon /></IconButton>
              <IconButton aria-label='Actual size'><OneToOneIcon /></IconButton>
            </PageBar>
          </Center>

          <RightPanel>
            <PanelTitle>Edit Watermark</PanelTitle>
            <PanelScroll>
              <Options>
                <WatermarkText aria-label='Watermark text' value={text} onChange={(e) => setText(e.target.value)} />
                <FontRow>
                  <SelectBox $font='"Liberation Sans", sans-serif'>
                    <select aria-label='Font'><option>Helvetica · Regular</option></select>
                    <Triangle />
                  </SelectBox>
                  <StyleTools>
                    <IconButton type='button' aria-label='Underline'><UnderlineIcon /></IconButton>
                    <IconButton type='button' aria-label='Align center'><AlignIcon /></IconButton>
                    <ColorButton type='button' aria-label='Text color' />
                  </StyleTools>
                </FontRow>
                <hr />
                <h3>Layout</h3>
                <LayoutInput aria-label='Layout'><option>Single</option></LayoutInput>
                <DisabledBox type='button' disabled aria-label='Spacing' />
                <hr />
                <h3>Rotate</h3>
                <Slider><input type='range' max='360' defaultValue='37' aria-label='Rotate' /></Slider>
                <h3>Opacity</h3>
                <Slider $checker $last><input type='range' defaultValue='80' aria-label='Opacity' /></Slider>
                <hr />
                <h3>Page Range</h3>
                <RangeRow>
                  <PageStepper label='First page' />
                  <i />
                  <PageStepper label='Last page' />
                </RangeRow>
                <SelectBox>
                  <select aria-label='Pages'><option>All Pages in Range</option></select>
                  <Triangle />
                </SelectBox>
                <hr />
                <CheckRow><input type='checkbox' />Automatically add to starred</CheckRow>
              </Options>
              <ScrollBar $width='19px' />
            </PanelScroll>
            <Actions>
              <ActionButton>Cancel</ActionButton>
              <ActionButton $primary>Done</ActionButton>
            </Actions>
            <ColorPicker />
          </RightPanel>
        </Body>
      </Window>
    </>
  )
}

export default App
